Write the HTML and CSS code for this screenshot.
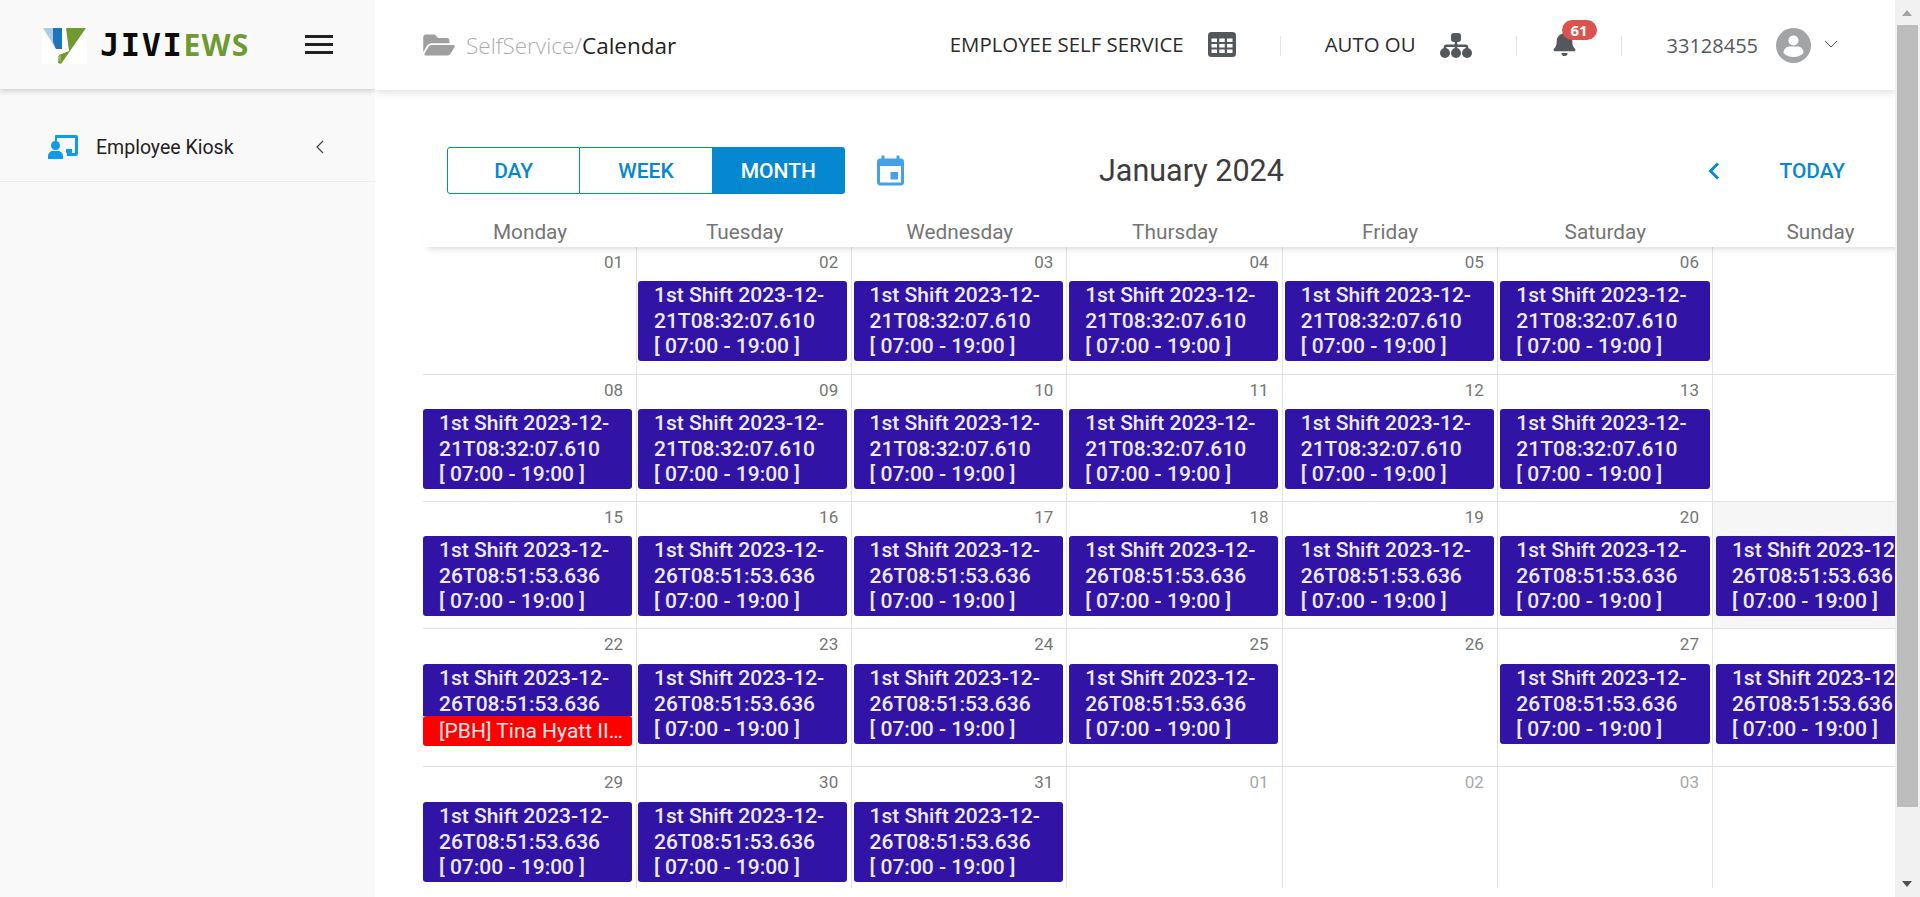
FILE: index.html
```html
<!DOCTYPE html>
<html lang="en">
<head>
    <meta charset="UTF-8">
    <meta name="viewport" content="width=device-width, initial-scale=1.0">
    <title>SelfService - Calendar</title>
    <link rel="stylesheet" href="styles.css">
</head>
<body>
    <!-- Sidebar -->
    <aside class="sidebar">
        <div class="brand">
            <svg class="brand-mark" viewBox="0 0 45 37">
                <rect width="45" height="37" fill="#fff"/>
                <polygon points="1,1 20,1 20,22 14,22" fill="#a9cbe4"/>
                <polygon points="11,1 20,1 20,22 14,22 11,15" fill="#1f73bd"/>
                <polygon points="24,1 44,1 19,37 16,36 17,28 27,24" fill="#6f9a2f"/>
                <polygon points="16,29 19,28 19,37" fill="#8fb45a"/>
            </svg>
            <span class="brand-name">JIVI<span class="brand-accent">EWS</span></span>
            <div class="burger"><i></i><i></i><i></i></div>
        </div>
        <div class="side-item">
            <svg class="side-icon" viewBox="0 0 30 24">
                <path d="M8 0h20a2 2 0 0 1 2 2v17a2 2 0 0 1-2 2h-9v-3h8V3H9v3H7V1a1 1 0 0 1 1-1z" fill="#0e9be8"/>
                <rect x="18" y="14" width="6" height="4" fill="#0e9be8"/>
                <circle cx="7.500" cy="10.500" r="4.500" fill="#0e9be8"/>
                <path d="M0 24v-3c0-3 2.500-5 5-5h5c2.500 0 5 2 5 5v3z" fill="#0e9be8"/>
            </svg>
            <span class="side-label">Employee Kiosk</span>
            <svg class="side-chevron" viewBox="0 0 8 14"><path d="M7 1 1 7l6 6" fill="none" stroke="#444" stroke-width="1.200"/></svg>
        </div>
    </aside>

    <main class="main">
        <!-- Top bar -->
        <header class="topbar">
            <svg class="folder-icon" viewBox="0 0 576 512"><path d="M572.694 292.093L500.27 416.248A63.997 63.997 0 0 1 444.989 448H45.025c-18.523 0-30.064-20.093-20.731-36.093l72.424-124.155A64 64 0 0 1 152 256h399.964c18.523 0 30.064 20.093 20.73 36.093zM152 224h328v-48c0-26.51-21.49-48-48-48H272l-64-64H48C21.49 64 0 85.49 0 112v278.046l69.077-118.418C86.214 242.25 117.989 224 152 224z"/></svg>
            <div class="crumb"><span class="crumb-root">SelfService/</span>Calendar</div>

            <div class="top-right">
                <span class="top-text">EMPLOYEE SELF SERVICE</span>
                <svg class="table-icon" viewBox="0 0 28 25">
                    <rect width="28" height="25" rx="3.500" fill="#54575c"/>
                    <g fill="#fff">
                        <rect x="3.500" y="6.500" width="5.500" height="3.500"/><rect x="11.250" y="6.500" width="5.500" height="3.500"/><rect x="19" y="6.500" width="5.500" height="3.500"/>
                        <rect x="3.500" y="12" width="5.500" height="3.500"/><rect x="11.250" y="12" width="5.500" height="3.500"/><rect x="19" y="12" width="5.500" height="3.500"/>
                        <rect x="3.500" y="17.500" width="5.500" height="3.500"/><rect x="11.250" y="17.500" width="5.500" height="3.500"/><rect x="19" y="17.500" width="5.500" height="3.500"/>
                    </g>
                </svg>
                <span class="top-sep sep-one"></span>
                <span class="top-text">AUTO OU</span>
                <svg class="org-icon" viewBox="0 0 32 25">
                    <g fill="#54575c">
                        <rect x="11" y="0" width="10" height="9" rx="3"/>
                        <rect x="14.750" y="8" width="2.500" height="9"/>
                        <path d="M3.750 17v-3a2.500 2.500 0 0 1 2.500-2.500h19.500a2.500 2.500 0 0 1 2.500 2.500v3h-2.500v-3H6.250v3z"/>
                        <circle cx="5" cy="20" r="5"/><circle cx="16" cy="20" r="5"/><circle cx="27" cy="20" r="5"/>
                    </g>
                </svg>
                <span class="top-sep sep-two"></span>
                <div class="bell">
                    <svg class="bell-icon" viewBox="0 0 448 512"><path d="M224 512c35.32 0 63.97-28.65 63.97-64H160.03c0 35.35 28.65 64 63.97 64zm215.39-149.71c-19.32-20.76-55.47-51.99-55.47-154.29 0-77.7-54.48-139.9-127.94-155.16V32c0-17.67-14.32-32-31.98-32s-31.98 14.33-31.98 32v20.84C118.56 68.1 64.08 130.3 64.08 208c0 102.3-36.15 133.53-55.47 154.29-6 6.45-8.66 14.16-8.61 21.71.11 16.4 12.98 32 32.1 32h383.8c19.12 0 32-15.6 32.1-32 .05-7.55-2.61-15.27-8.61-21.71z"/></svg>
                    <span class="bell-badge">61</span>
                </div>
                <span class="top-sep sep-three"></span>
                <span class="user-id">33128455</span>
                <svg class="avatar" viewBox="0 0 35 35">
                    <circle cx="17.500" cy="17.500" r="17.500" fill="#a3a4a6"/>
                    <circle cx="17.500" cy="12.500" r="5" fill="#fff"/>
                    <path d="M7.500 25c0-4 3-6.500 6-6.500h8c3 0 6 2.500 6 6.500-2.500 2.500-6 4-10 4s-7.500-1.500-10-4z" fill="#fff"/>
                </svg>
                <svg class="user-chevron" viewBox="0 0 14 8"><path d="M1 1l6 6 6-6" fill="none" stroke="#555" stroke-width="1"/></svg>
            </div>
        </header>

        <section class="content">
            <!-- Calendar toolbar -->
            <div class="toolbar">
                <div class="view-group">
                    <button class="view-btn" type="button">DAY</button>
                    <button class="view-btn" type="button">WEEK</button>
                    <button class="view-btn active" type="button">MONTH</button>
                </div>
                <svg class="cal-icon" viewBox="3 1 18 20"><path d="M17 12h-5v5h5v-5zM16 1v2H8V1H6v2H5c-1.110 0-1.990.9-1.990 2L3 19c0 1.100.89 2 2 2h14c1.100 0 2-.9 2-2V5c0-1.100-.9-2-2-2h-1V1h-2zm3 18H5V8h14v11z"/></svg>
                <h1 class="cal-title">January 2024</h1>
                <div class="cal-nav">
                    <svg class="nav-chevron" viewBox="0 0 12 18"><path d="M10 1.500 2.500 9l7.500 7.500" fill="none" stroke="#0688d1" stroke-width="3"/></svg>
                    <span class="today-link">TODAY</span>
                </div>
            </div>

            <!-- Month grid -->
            <div class="weekdays">
                <div>Monday</div><div>Tuesday</div><div>Wednesday</div><div>Thursday</div><div>Friday</div><div>Saturday</div><div>Sunday</div>
            </div>

            <div class="month">
                <div class="week">
                    <div class="day"><div class="date">01</div></div>
                    <div class="day"><div class="date">02</div><div class="shift">1st Shift 2023-12-21T08:32:07.610<span class="shift-time">[ 07:00 - 19:00 ]</span></div></div>
                    <div class="day"><div class="date">03</div><div class="shift">1st Shift 2023-12-21T08:32:07.610<span class="shift-time">[ 07:00 - 19:00 ]</span></div></div>
                    <div class="day"><div class="date">04</div><div class="shift">1st Shift 2023-12-21T08:32:07.610<span class="shift-time">[ 07:00 - 19:00 ]</span></div></div>
                    <div class="day"><div class="date">05</div><div class="shift">1st Shift 2023-12-21T08:32:07.610<span class="shift-time">[ 07:00 - 19:00 ]</span></div></div>
                    <div class="day"><div class="date">06</div><div class="shift">1st Shift 2023-12-21T08:32:07.610<span class="shift-time">[ 07:00 - 19:00 ]</span></div></div>
                    <div class="day"><div class="date">07</div></div>
                </div>
                <div class="week">
                    <div class="day"><div class="date">08</div><div class="shift">1st Shift 2023-12-21T08:32:07.610<span class="shift-time">[ 07:00 - 19:00 ]</span></div></div>
                    <div class="day"><div class="date">09</div><div class="shift">1st Shift 2023-12-21T08:32:07.610<span class="shift-time">[ 07:00 - 19:00 ]</span></div></div>
                    <div class="day"><div class="date">10</div><div class="shift">1st Shift 2023-12-21T08:32:07.610<span class="shift-time">[ 07:00 - 19:00 ]</span></div></div>
                    <div class="day"><div class="date">11</div><div class="shift">1st Shift 2023-12-21T08:32:07.610<span class="shift-time">[ 07:00 - 19:00 ]</span></div></div>
                    <div class="day"><div class="date">12</div><div class="shift">1st Shift 2023-12-21T08:32:07.610<span class="shift-time">[ 07:00 - 19:00 ]</span></div></div>
                    <div class="day"><div class="date">13</div><div class="shift">1st Shift 2023-12-21T08:32:07.610<span class="shift-time">[ 07:00 - 19:00 ]</span></div></div>
                    <div class="day"><div class="date">14</div></div>
                </div>
                <div class="week">
                    <div class="day"><div class="date">15</div><div class="shift">1st Shift 2023-12-26T08:51:53.636<span class="shift-time">[ 07:00 - 19:00 ]</span></div></div>
                    <div class="day"><div class="date">16</div><div class="shift">1st Shift 2023-12-26T08:51:53.636<span class="shift-time">[ 07:00 - 19:00 ]</span></div></div>
                    <div class="day"><div class="date">17</div><div class="shift">1st Shift 2023-12-26T08:51:53.636<span class="shift-time">[ 07:00 - 19:00 ]</span></div></div>
                    <div class="day"><div class="date">18</div><div class="shift">1st Shift 2023-12-26T08:51:53.636<span class="shift-time">[ 07:00 - 19:00 ]</span></div></div>
                    <div class="day"><div class="date">19</div><div class="shift">1st Shift 2023-12-26T08:51:53.636<span class="shift-time">[ 07:00 - 19:00 ]</span></div></div>
                    <div class="day"><div class="date">20</div><div class="shift">1st Shift 2023-12-26T08:51:53.636<span class="shift-time">[ 07:00 - 19:00 ]</span></div></div>
                    <div class="day shaded"><div class="date">21</div><div class="shift">1st Shift 2023-12-26T08:51:53.636<span class="shift-time">[ 07:00 - 19:00 ]</span></div></div>
                </div>
                <div class="week tall">
                    <div class="day"><div class="date">22</div><div class="shift short">1st Shift 2023-12-26T08:51:53.636</div><div class="leave">[PBH] Tina Hyatt II…</div></div>
                    <div class="day"><div class="date">23</div><div class="shift">1st Shift 2023-12-26T08:51:53.636<span class="shift-time">[ 07:00 - 19:00 ]</span></div></div>
                    <div class="day"><div class="date">24</div><div class="shift">1st Shift 2023-12-26T08:51:53.636<span class="shift-time">[ 07:00 - 19:00 ]</span></div></div>
                    <div class="day"><div class="date">25</div><div class="shift">1st Shift 2023-12-26T08:51:53.636<span class="shift-time">[ 07:00 - 19:00 ]</span></div></div>
                    <div class="day"><div class="date">26</div></div>
                    <div class="day"><div class="date">27</div><div class="shift">1st Shift 2023-12-26T08:51:53.636<span class="shift-time">[ 07:00 - 19:00 ]</span></div></div>
                    <div class="day"><div class="date">28</div><div class="shift">1st Shift 2023-12-26T08:51:53.636<span class="shift-time">[ 07:00 - 19:00 ]</span></div></div>
                </div>
                <div class="week last">
                    <div class="day"><div class="date">29</div><div class="shift">1st Shift 2023-12-26T08:51:53.636<span class="shift-time">[ 07:00 - 19:00 ]</span></div></div>
                    <div class="day"><div class="date">30</div><div class="shift">1st Shift 2023-12-26T08:51:53.636<span class="shift-time">[ 07:00 - 19:00 ]</span></div></div>
                    <div class="day"><div class="date">31</div><div class="shift">1st Shift 2023-12-26T08:51:53.636<span class="shift-time">[ 07:00 - 19:00 ]</span></div></div>
                    <div class="day other"><div class="date">01</div></div>
                    <div class="day other"><div class="date">02</div></div>
                    <div class="day other"><div class="date">03</div></div>
                    <div class="day other"><div class="date">04</div></div>
                </div>
            </div>
        </section>
    </main>

    <!-- Page scrollbar -->
    <div class="scrollbar">
        <span class="arrow-up"></span>
        <div class="scroll-thumb"></div>
        <span class="arrow-down"></span>
    </div>
</body>
</html>
```

FILE: styles.css
```css
* {
    box-sizing: border-box;
}

html, body {
    height: 100%;
}

body {
    margin: 0;
    display: flex;
    overflow: hidden;
    background-color: #fff;
    font-family: 'Roboto', 'Liberation Sans', sans-serif;
    color: #333;
}

/* Sidebar */
.sidebar {
    width: 375px;
    flex-shrink: 0;
    background-color: #f9f9f9;
    overflow: hidden;
}

.brand {
    height: 89px;
    display: flex;
    align-items: center;
    padding-left: 42px;
    box-shadow: 0 2px 6px rgba(0, 0, 0, 0.18);
}

.brand-mark {
    width: 45px;
    height: 37px;
    margin-top: 1px;
}

.brand-name {
    margin-left: 13px;
    font-family: 'DejaVu Sans Mono', monospace;
    font-size: 32px;
    font-weight: 700;
    letter-spacing: 1.600px;
    color: #0b0b0b;
}

.brand-accent {
    font-family: 'Open Sans', sans-serif;
    letter-spacing: 1.300px;
    font-size: 30px;
    color: #6f9a2f;
}

.burger {
    margin-left: auto;
    margin-right: 42px;
    width: 28px;
    display: flex;
    flex-direction: column;
    gap: 5px;
}

.burger i {
    display: block;
    height: 3px;
    background-color: #222;
}

.side-item {
    height: 94px;
    padding: 25px 51px 0 48px;
    display: flex;
    align-items: center;
    border-bottom: 1px solid #ececec;
    margin-top: -1px;
}

.side-icon {
    width: 30px;
    height: 24px;
}

.side-label {
    margin-left: 18px;
    font-size: 19.500px;
    color: #222;
}

.side-chevron {
    margin-left: auto;
    width: 8px;
    height: 14px;
}

/* Top bar */
.main {
    width: 1520px;
    flex-shrink: 0;
    overflow: hidden;
}

.topbar {
    height: 90px;
    display: flex;
    align-items: center;
    padding-left: 48px;
    padding-right: 57px;
    box-shadow: 0 2px 8px rgba(0, 0, 0, 0.14);
    position: relative;
}

.folder-icon {
    width: 32px;
    height: 28px;
    fill: #9f9f9f;
    margin-top: -1px;
}

.crumb {
    margin-left: 11px;
    font-family: 'Open Sans', sans-serif;
    font-size: 22.500px;
    color: #222;
}

.crumb-root {
    color: #adadad;
    font-weight: 300;
}

.top-right {
    margin-left: auto;
    display: flex;
    align-items: center;
}

.top-text {
    font-family: 'Open Sans', sans-serif;
    font-size: 20.400px;
    color: #2b2b2b;
    margin-bottom: 2px;
}

.table-icon {
    width: 28px;
    height: 25px;
    margin-left: 24px;
    margin-top: -2px;
}

.top-sep {
    width: 1px;
    height: 20px;
    background-color: #e4e4e4;
    margin-top: 1px;
}

.sep-one {
    margin-left: 44px;
    margin-right: 44px;
}

.org-icon {
    width: 32px;
    height: 25px;
    margin-left: 24px;
    margin-top: 1px;
}

.sep-two {
    margin-left: 44px;
    margin-right: 36px;
}

.bell {
    position: relative;
    width: 23px;
    height: 25px;
    margin-top: -4px;
}

.bell-icon {
    width: 23px;
    height: 25px;
    fill: #54575c;
    display: block;
}

.bell-badge {
    position: absolute;
    left: 9px;
    top: -11px;
    width: 35px;
    height: 20px;
    border-radius: 10px;
    background-color: #db524f;
    color: #fff;
    font-family: 'Open Sans', sans-serif;
    font-size: 15px;
    font-weight: 700;
    line-height: 20px;
    text-align: center;
}

.sep-three {
    margin-left: 45px;
    margin-right: 45px;
}

.user-id {
    font-family: 'Open Sans', sans-serif;
    font-size: 20px;
    color: #55585c;
}

.avatar {
    width: 35px;
    height: 35px;
    margin-left: 18px;
}

.user-chevron {
    width: 14px;
    height: 8px;
    margin-left: 13px;
    margin-top: -2px;
}

/* Toolbar */
.content {
    padding-left: 48px;
}

.toolbar {
    margin-top: 57px;
    padding-left: 24px;
    padding-right: 50px;
    display: flex;
    align-items: center;
}

.view-group {
    display: flex;
    height: 47px;
    width: 398px;
}

.view-btn {
    flex: 1;
    border: 1px solid #0688d1;
    border-left: none;
    background-color: #fff;
    color: #0688d1;
    font-family: inherit;
    font-size: 21px;
    font-weight: 500;
    padding: 0;
}

.view-btn:first-child {
    border-left: 1px solid #0688d1;
    border-radius: 3px 0 0 3px;
}

.view-btn.active {
    background-color: #0688d1;
    color: #fff;
    border-radius: 0 3px 3px 0;
}

.cal-icon {
    width: 27px;
    height: 31px;
    margin-left: 32px;
    fill: #42a1e8;
}

.cal-title {
    margin: 0 0 0 195px;
    font-size: 30.500px;
    font-weight: 400;
    color: #3d3d3d;
}

.cal-nav {
    margin-left: auto;
    display: flex;
    align-items: center;
    gap: 60px;
}

.nav-chevron {
    width: 12px;
    height: 18px;
}

.today-link {
    color: #0688d1;
    font-size: 20.800px;
    font-weight: 500;
}

/* Month grid */
.weekdays,
.week {
    display: grid;
    grid-template-columns: 214px repeat(6, 215.200px);
    width: 1505.200px;
}

.weekdays {
    height: 27px;
    margin-top: 26px;
    position: relative;
    z-index: 1;
    background-color: #fff;
    box-shadow: 0 6px 6px -4px rgba(0, 0, 0, 0.14);
    font-size: 20.800px;
    color: #757575;
    text-align: center;
    line-height: 24px;
}

.month {
    margin-top: -1px;
}

.week {
    height: 127px;
    border-top: 1px solid #e2e2e2;
}

.week:first-child {
    height: 128px;
}

.week.tall {
    height: 138px;
}

.week.last {
    height: 122px;
}

.day {
    border-right: 1px solid #e2e2e2;
    padding-right: 4px;
    padding-left: 1px;
    min-width: 0;
}

.day:first-child {
    padding-left: 0;
}

/* events drift a little against the column lines */
.day:nth-child(3) { --nudge: 0.400px; }
.day:nth-child(4) { --nudge: 0.800px; }
.day:nth-child(5) { --nudge: 1.200px; }
.day:nth-child(6) { --nudge: 1.600px; }
.day:nth-child(7) { --nudge: 2px; }

.day.shaded {
    background-color: #f6f6f6;
}

.date {
    height: 34px;
    padding-right: 9px;
    text-align: right;
    font-size: 17px;
    line-height: 31px;
    color: #757575;
}

.week.tall .date,
.week.last .date {
    height: 35px;
}

.day.other .date {
    color: #a8a8a8;
}

.shift {
    height: 80px;
    margin-left: var(--nudge, 0);
    margin-right: calc(-1 * var(--nudge, 0px));
    padding: 2px 8px 0 16px;
    border-radius: 3px;
    background-color: #3114a6;
    color: #ecebf7;
    font-size: 21px;
    font-weight: 500;
    line-height: 25.500px;
}

.shift-time {
    display: block;
}

.shift.short {
    height: 52px;
    border-radius: 3px 3px 0 0;
}

.leave {
    height: 30px;
    padding: 0 8px 0 16px;
    border-radius: 3px;
    background-color: #f00;
    color: #f6e8e8;
    font-size: 21px;
    line-height: 31px;
    white-space: nowrap;
    overflow: hidden;
}

/* Scrollbar */
.scrollbar {
    width: 25px;
    flex-shrink: 0;
    background-color: #f1f1f1;
    position: relative;
}

.scroll-thumb {
    position: absolute;
    left: 2px;
    top: 25px;
    width: 21px;
    height: 782px;
    background-color: #bdbdbd;
}

.arrow-up,
.arrow-down {
    position: absolute;
    left: 7px;
    width: 0;
    height: 0;
    border-left: 5.500px solid transparent;
    border-right: 5.500px solid transparent;
}

.arrow-up {
    top: 10px;
    border-bottom: 6px solid #a3a3a3;
}

.arrow-down {
    bottom: 10px;
    border-top: 6px solid #505050;
}
```
